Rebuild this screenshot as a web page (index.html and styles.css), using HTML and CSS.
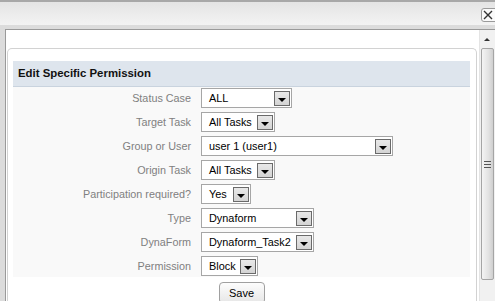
FILE: index.html
```html
<!DOCTYPE html>
<html lang="en">
<head>
    <meta charset="UTF-8">
    <meta name="viewport" content="width=device-width, initial-scale=1.0">
    <title>Edit Specific Permission</title>
    <link rel="stylesheet" href="styles.css">
</head>
<body>
    <div class="titlebar">
        <span class="close-btn">
            <svg width="10" height="10" viewBox="0 0 10 10"><path d="M1 1L9 9M9 1L1 9" stroke="#333" stroke-width="1.4"/></svg>
        </span>
    </div>
    <div class="frame">
        <div class="content">
            <div class="panel">
                <div class="panel-header">Edit Specific Permission</div>
                <div class="form-grid">
                    <label>Status Case</label>
                    <div class="select" style="width: 91px"><span>ALL</span><i class="arrow"></i></div>

                    <label>Target Task</label>
                    <div class="select" style="width: 74px"><span>All Tasks</span><i class="arrow"></i></div>

                    <label>Group or User</label>
                    <div class="select" style="width: 192px"><span>user 1 (user1)</span><i class="arrow"></i></div>

                    <label>Origin Task</label>
                    <div class="select" style="width: 74px"><span>All Tasks</span><i class="arrow"></i></div>

                    <label>Participation required?</label>
                    <div class="select" style="width: 50px"><span>Yes</span><i class="arrow"></i></div>

                    <label>Type</label>
                    <div class="select" style="width: 113px"><span>Dynaform</span><i class="arrow"></i></div>

                    <label>DynaForm</label>
                    <div class="select" style="width: 113px"><span>Dynaform_Task2</span><i class="arrow"></i></div>

                    <label>Permission</label>
                    <div class="select" style="width: 57px"><span>Block</span><i class="arrow"></i></div>
                </div>
                <div class="actions">
                    <button type="button">Save</button>
                </div>
            </div>
        </div>
        <div class="scrollbar">
            <div class="scroll-up"></div>
            <div class="scroll-thumb"><span class="grip"></span></div>
        </div>
    </div>
</body>
</html>
```

FILE: styles.css
```css
body {
    margin: 0;
    background-color: #dcdcdc;
    font-family: "Liberation Sans", Arial, sans-serif;
    height: 301px;
    overflow: hidden;
}
.titlebar {
    height: 23px;
    border-top: 2px solid #a8a8a8;
    background: linear-gradient(#e4e4e4, #f3f3f3);
    position: relative;
}
.close-btn {
    position: absolute;
    right: -4px;
    top: 6px;
    width: 15px;
    height: 12px;
    border: 1px solid #9a9a9a;
    border-radius: 3px;
    background: #fafafa;
    display: flex;
    align-items: center;
    padding-left: 1px;
}
.frame {
    display: flex;
    margin: 4px 0 0 5px;
    border-top: 1px solid #9a9a9a;
    border-left: 1px solid #9a9a9a;
    height: 272px;
}
.content {
    flex: 1;
    background: white;
    padding: 18px 2px 0 1px;
}
.panel {
    border: 1px solid #d2d2d2;
    border-bottom: none;
    border-radius: 5px 5px 0 0;
    padding: 12px 6px 0 5px;
}
.panel-header {
    height: 25px;
    line-height: 25px;
    background-color: #dee5ed;
    border-bottom: 1px solid #c9d3de;
    color: #111;
    font-weight: bold;
    font-size: 11.4px;
    padding-left: 5px;
}
.form-grid {
    display: grid;
    grid-template-columns: 178px 1fr;
    column-gap: 10px;
    grid-auto-rows: 24px;
    align-items: start;
    background-color: #f9f9f9;
    padding-top: 1px;
    height: 189px;
}
.form-grid label {
    text-align: right;
    color: #808080;
    font-size: 10.8px;
    line-height: 20px;
}
.select {
    border: 1px solid #a6a6a6;
    background: white;
    display: flex;
    align-items: center;
    justify-content: space-between;
    font-size: 10.9px;
    color: #000;
    padding-left: 7px;
    box-sizing: border-box;
    height: 20px;
    white-space: nowrap;
}
.arrow {
    width: 14px;
    height: 13px;
    margin-right: 1px;
    border: 1px solid #6a6a6a;
    background: linear-gradient(#e8e8e8, #d4d4d4);
    position: relative;
    flex-shrink: 0;
}
.arrow::after {
    content: "";
    position: absolute;
    left: 3px;
    top: 6px;
    border-left: 4px solid transparent;
    border-right: 4px solid transparent;
    border-top: 4px solid #000;
}
.actions {
    text-align: center;
    padding-top: 5px;
}
button {
    width: 46px;
    height: 22px;
    border: 1px solid #a0a0a0;
    border-radius: 4px;
    background: linear-gradient(#fdfdfd, #e6e6e6);
    font-family: "Liberation Sans", Arial, sans-serif;
    font-size: 11px;
    color: #000;
    padding: 0;
}
.scrollbar {
    width: 15px;
    background: #f1f1f1;
    border-left: 1px solid #e4e4e4;
}
.scroll-up {
    height: 18px;
    position: relative;
}
.scroll-up::after {
    content: "";
    position: absolute;
    left: 4px;
    top: 8px;
    border-left: 3px solid transparent;
    border-right: 3px solid transparent;
    border-bottom: 3px solid #333;
}
.scroll-thumb {
    height: 230px;
    margin: 0 1px 0 1px;
    border: 1px solid #a5a5a5;
    border-radius: 2px;
    background: linear-gradient(90deg, #f4f4f4, #e2e2e2 60%, #cfcfcf);
    display: flex;
    align-items: center;
    justify-content: center;
}
.grip {
    width: 7px;
    height: 7px;
    background: repeating-linear-gradient(#555 0 1px, transparent 1px 3px);
}
```
